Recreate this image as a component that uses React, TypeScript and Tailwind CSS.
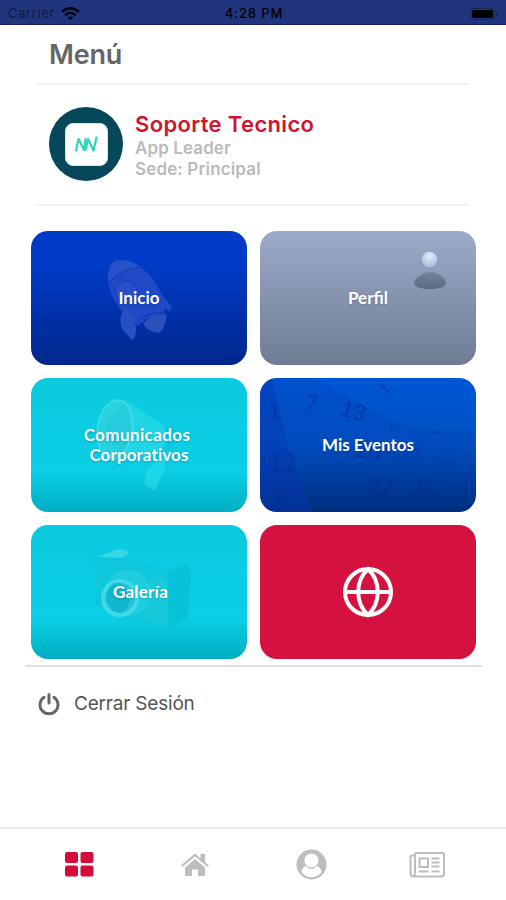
import type { ReactNode } from "react";

function StatusBar() {
  return (
    <header className="grid h-[25px] grid-cols-3 items-center border-b border-[#17205f] bg-[#21357f] px-2 pt-[3px] text-[13px] text-black">
      <div className="flex items-center gap-[6px]">
        <span className="tracking-[0.65px] text-[#10183c]">Carrier</span>
        <svg width="19" height="14" viewBox="0 0 19 14" fill="none" stroke="#02040e" strokeWidth="2.5">
          <path d="M1 4.8C6 .2 13 .2 18 4.8" />
          <path d="M4.2 8.2C7.3 5.4 11.7 5.4 14.8 8.2" />
          <path d="M9.5 13.4 6.7 10.6C8.2 9.2 10.8 9.2 12.3 10.6Z" fill="#02040e" stroke="none" />
        </svg>
      </div>
      <span className="pl-[2px] text-center font-medium tracking-[0.9px]">4:28 PM</span>
      <div className="flex items-center justify-end">
        <div className="h-[12px] w-[25px] rounded-[3px] border border-[#172554] p-[1px]">
          <div className="h-full rounded-[2px] bg-black" />
        </div>
        <div className="ml-[1px] h-[4px] w-[2px] rounded-r bg-[#172554]" />
      </div>
    </header>
  );
}

function Card({ className, label, children }: { className: string; label?: ReactNode; children: ReactNode }) {
  return (
    <div className={`relative flex h-[134px] items-center justify-center overflow-hidden rounded-[17px] ${className}`}>
      <svg className="absolute inset-0" width="216" height="134" viewBox="0 0 216 134" fill="none">
        {children}
      </svg>
      {label && (
        <span className="relative text-center font-bold text-white [text-shadow:0_1px_3px_rgba(0,0,0,0.2)]">
          {label}
        </span>
      )}
    </div>
  );
}

function Rocket() {
  return (
    <g>
      <path d="M77 49C77 38 80 32 84 30C94 28 103 31 109 36C120 43 126 53 131 64L141 76L139 81L134 78L132 87C124 83 113 88 107 95L101 89C86 78 79 65 77 49Z" fill="#1f49c7" />
      <path d="M77 51C77 39 80 32 84 30C94 28 103 31 109 36C97 37 85 42 77 51Z" fill="#2850c9" />
      <path d="M78 52C85 43 97 37 110 36" stroke="#0c36b0" strokeOpacity=".7" />
      <circle cx="95" cy="61" r="11" fill="#294fc9" stroke="#153cb8" strokeOpacity=".7" />
      <path d="M93 78C89 84 88 93 92 99L101 109C105 107 106 98 104 92L101 84Z" fill="#2850c0" />
      <path d="M112 92L121 85L135 83C136 90 133 98 128 102C121 101 115 99 112 92Z" fill="#2b50bb" />
      <path d="M106 91C112 85 121 81 132 82L134 78L139 81" stroke="#0b30a0" strokeOpacity=".8" />
    </g>
  );
}

function Person() {
  return (
    <g>
      <defs>
        <radialGradient id="head" cx=".5" cy=".3" r=".7">
          <stop stopColor="#e3ecff" />
          <stop offset="1" stopColor="#abbbd9" />
        </radialGradient>
        <linearGradient id="bust" x1="0" y1="0" x2="0" y2="1">
          <stop stopColor="#75839f" />
          <stop offset="1" stopColor="#5a6882" />
        </linearGradient>
      </defs>
      <path d="M154 51C156 46 163 41 170 41C177 41 184 46 186 51C186 56 180 58 170 58C160 58 154 56 154 51Z" fill="url(#bust)" />
      <circle cx="169.5" cy="28.5" r="7.8" fill="url(#head)" />
    </g>
  );
}

function Megaphone() {
  return (
    <g>
      <path d="M91 22C99 23 110 33 118 38L134 48V66L126 77L86 79Z" fill="#2fdbea" fillOpacity=".6" />
      <ellipse cx="84" cy="51" rx="17.5" ry="29" fill="#2ad2e1" stroke="#50e0eb" strokeOpacity=".6" strokeWidth="2" transform="rotate(8 84 51)" />
      <path d="M93 26C102 36 102 60 92 74C84 73 76 62 75 51C77 40 84 32 93 26Z" fill="#1cc5d7" fillOpacity=".4" />
      <path d="M134 47L151 55C149 63 143 69 134 72Z" fill="#05c6db" fillOpacity=".5" />
      <path d="M116 92L129 80H134V91L124 112C119 111 115 108 113 105Z" fill="#2bdcec" fillOpacity=".6" />
    </g>
  );
}

function Calendar() {
  return (
    <g>
      <path d="M0 0H12C20 40 32 95 54 134H0Z" fill="#0634b0" fillOpacity=".55" />
      <path d="M12 0H55C85 14 112 34 145 48L216 53V134H54C32 95 20 40 12 0Z" fill="#0035b4" fillOpacity=".18" />
      <g fill="#00298f" className="text-[22px] font-medium">
        <text x="45" y="32" fillOpacity=".4" transform="rotate(4 45 32)">7</text>
        <text x="79" y="37" fillOpacity=".6" transform="rotate(16 79 37)">13</text>
        <text x="8" y="41" fillOpacity=".4">1</text>
        <text x="9" y="94" fillOpacity=".4" fontSize="24">12</text>
        <text x="12" y="124" fillOpacity=".3" className="text-[18px]">19</text>
        <text x="95" y="79" fillOpacity=".45" transform="rotate(6 95 79)">20</text>
        <text x="107" y="116" fillOpacity=".65" transform="rotate(6 107 116)">27</text>
        <text x="150" y="117" fillOpacity=".35" transform="rotate(6 150 117)">28</text>
        <text x="138" y="82" fillOpacity=".25" transform="rotate(6 138 82)">21</text>
        <text x="171" y="84" fillOpacity=".2" transform="rotate(6 171 84)">22</text>
        <path d="M117 6L133 19L125 7ZM130 44L134 49L130 50ZM173 53H180V56H173Z" fillOpacity=".35" />
      </g>
    </g>
  );
}

function Camera() {
  return (
    <g>
      <path d="M63 32L83 25C89 24 97 25 98 29L93 34L140 45L153 39C158 39 160 42 160 46L157 94L140 106L95 94L65 80Z" fill="#10c6da" fillOpacity=".75" />
      <path d="M137 46L153 39C158 39 160 42 160 46L157 91L138 104Z" fill="#05bbd2" fillOpacity=".45" />
      <path d="M67 32L84 25C90 23 97 25 98 29L91 33Z" fill="#42dbe8" fillOpacity=".8" />
      <circle cx="97" cy="68" r="23" fill="#36d4e1" fillOpacity=".45" />
      <circle cx="89" cy="73" r="17" fill="#20c6d8" stroke="#3fdae6" strokeWidth="4" />
      <ellipse cx="87" cy="73" rx="11" ry="15" fill="#12b7cf" transform="rotate(-8 87 73)" />
      <path d="M119 55C128 49 137 54 137 61V101L113 94Z" fill="#20cbdc" fillOpacity=".55" />
      <circle cx="67" cy="77" r="3.5" fill="#07bfd1" fillOpacity=".5" />
    </g>
  );
}

export default function App() {
  return (
    <div className="flex h-[900px] w-[506px] flex-col overflow-hidden bg-white font-['Inter',sans-serif]">
      <StatusBar />

      <div className="mx-[37px] h-[60px] shrink-0 border-b-2 border-[#f3f3f3] pl-[12px] pt-[11px]">
        <h1 className="text-[27px] font-semibold leading-[38px] tracking-[-0.2px] text-[#666]">Menú</h1>
      </div>

      {/* Profile */}
      <div className="mx-[37px] flex h-[121px] shrink-0 gap-[12px] border-b-2 border-[#f2f2f2] pl-[12px] pt-[22px]">
        <div className="flex size-[74px] shrink-0 items-center justify-center rounded-full bg-[#064759]">
          <div className="flex size-[43px] items-center justify-center rounded-[8px] border border-[#d9e2ef] bg-white">
            <svg width="24" height="18" viewBox="0 0 24 18" fill="none" stroke="#2fd5b5" strokeWidth="2.2" strokeLinejoin="round" strokeLinecap="round">
              <path d="M2 15.5L4.5 4L10 15L11.5 4" />
              <path d="M11.5 15L14 4L19.5 15.5L22.5 2.5" />
            </svg>
          </div>
        </div>
        <div className="pt-[2px]">
          <h2 className="whitespace-nowrap text-[22px] font-semibold leading-[31px] tracking-[0.35px] text-[#d0142e]">Soporte Tecnico</h2>
          <p className="text-[17px] font-semibold leading-[16px] tracking-[0.1px] text-[#bababa]">App Leader</p>
          <p className="pt-[2px] text-[17px] font-semibold leading-[22px] tracking-[0.15px] text-[#bababa]">Sede: Principal</p>
        </div>
      </div>

      {/* Menu tiles */}
      <main className="grid shrink-0 grid-cols-[216px_216px] gap-x-[13px] gap-y-[13px] pl-[31px] pt-[25px] font-['Lato',sans-serif] text-[17px] leading-[20px]">
        <Card className="bg-linear-to-b from-[#003bc7] from-25% to-[#00278d]" label="Inicio">
          <Rocket />
        </Card>
        <Card className="bg-linear-to-b from-[#9cabca] to-[#6f7c94]" label="Perfil">
          <Person />
        </Card>
        <Card
          className="bg-linear-to-b from-[#0bcae0] via-[#0bcfe5] via-70% to-[#00adc2]"
          label={
            <>
              <span className="block pr-[4px] tracking-[0.4px]">Comunicados</span>
              <span className="block tracking-[0.1px]">Corporativos</span>
            </>
          }
        >
          <Megaphone />
        </Card>
        <Card className="bg-linear-to-b from-[#0057d5] via-[#0051c2] via-50% to-[#002d76]" label="Mis Eventos">
          <Calendar />
        </Card>
        <Card
          className="bg-linear-to-b from-[#0bcae0] via-[#0bcfe5] via-70% to-[#00adc2]"
          label={<span className="pl-[3px] tracking-[0.2px]">Galería</span>}
        >
          <Camera />
        </Card>
        <Card className="bg-[#d51140]">
          <g stroke="white" strokeWidth="4">
            <circle cx="108" cy="67" r="23" />
            <path d="M108 44C95 56 95 78 108 90C121 78 121 56 108 44ZM85 67H131" />
          </g>
        </Card>
      </main>

      <div className="ml-[25px] mt-[6px] flex h-[76px] w-[457px] shrink-0 items-center gap-[14px] border-t-2 border-[#dfdfdf] pl-[13px]">
        <svg width="22" height="24" viewBox="0 0 22 24" fill="none" stroke="#666" strokeWidth="3" strokeLinecap="round">
          <path d="M6 5.3A9 9 0 1 0 16 5.3M11 2.5V11" />
        </svg>
        <span className="text-[19px] tracking-[-0.2px] text-[#555]">Cerrar Sesión</span>
      </div>

      <nav className="mt-auto flex h-[73px] shrink-0 items-center border-t-2 border-[#ebebeb] px-[21px] text-[#bdbdbd]">
        <div className="flex flex-1 justify-center">
          <svg width="29" height="25" viewBox="0 0 29 25" fill="#d50b3b">
            <rect width="13" height="11" rx="2" />
            <rect x="15.5" width="13" height="11" rx="2" />
            <rect y="13.5" width="13" height="11" rx="2" />
            <rect x="15.5" y="13.5" width="13" height="11" rx="2" />
          </svg>
        </div>
        <div className="flex flex-1 justify-center">
          <svg width="28" height="24" viewBox="0 0 28 24" fill="currentColor">
            <path d="M14 6L24 14.5V22Q24 23 23 23H17V16.5H11V23H5Q4 23 4 22V14.5Z" />
            <path d="M1.5 12.5L14 2L26.5 12.5" fill="none" stroke="currentColor" strokeWidth="2.2" strokeLinecap="round" />
            <path d="M19.5 1H24V10L19.5 6.5Z" />
          </svg>
        </div>
        <div className="flex flex-1 justify-center">
          <svg width="31" height="31" viewBox="0 0 31 31">
            <circle cx="15.5" cy="15.5" r="15" fill="currentColor" />
            <circle cx="15.5" cy="11.5" r="7" fill="white" />
            <path d="M5 23C6 18.5 8.5 16.5 10.5 16.7C13 20.5 18 20.5 20.5 16.7C22.5 16.5 25 18.5 26 23C21 30.5 10 30.5 5 23Z" fill="white" stroke="#bdbdbd" strokeWidth="0.8" />
          </svg>
        </div>
        <div className="flex flex-1 justify-center">
          <svg width="36" height="26" viewBox="0 0 36 26" fill="none" stroke="currentColor" strokeWidth="2">
            <path d="M6 3.5H3Q1.5 3.5 1.5 5V21Q1.5 24.5 4.5 24.5H32Q35 24.5 35 22V2.5Q35 1 33.5 1H7.5Q6 1 6 2.5V21Q6 24 4 24" />
            <rect x="10.5" y="6.5" width="8.5" height="8.5" />
            <path d="M22.5 6.5H30.5M22.5 10.5H30.5M22.5 14.5H30.5M9.5 19.5H19.5M22.5 19.5H30.5" />
          </svg>
        </div>
      </nav>
    </div>
  );
}
